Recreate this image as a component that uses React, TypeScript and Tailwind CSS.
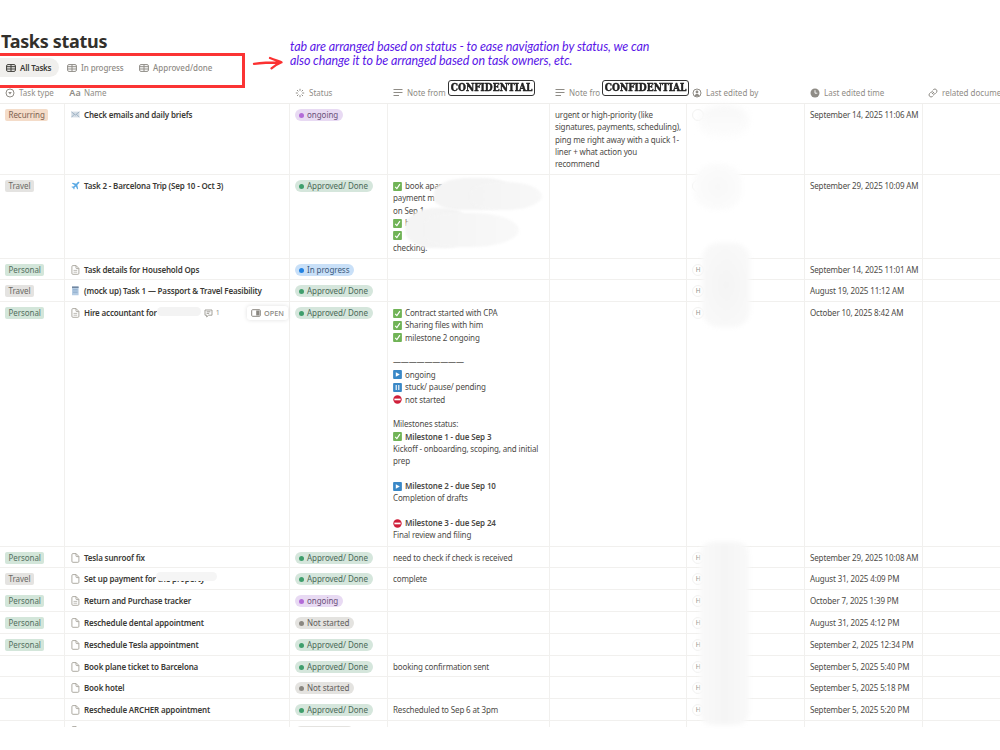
import React from 'react';
import clsx from 'clsx';

type Status = 'done' | 'progress' | 'ongoing' | 'idle';
type TaskType = 'Recurring' | 'Travel' | 'Personal';
type IconName = 'mail' | 'plane' | 'page' | 'text' | 'notebook';
type Mark = 'check' | 'play' | 'pause' | 'stop';

interface NoteLine {
  text: string;
  mark?: Mark;
  bold?: boolean;
}

interface Task {
  name: string;
  icon: IconName;
  type?: TaskType;
  status: Status;
  notes?: NoteLine[];
  extra?: string[];
  edited: string;
  avatar?: string;
  height: string;
  open?: boolean;
}

const COLUMNS = 'grid grid-cols-[65px_225px_98px_162px_137px_118px_118px_77px]';

const TASKS: Task[] = [
  {
    name: 'Check emails and daily briefs', icon: 'mail', type: 'Recurring', status: 'ongoing',
    extra: ['urgent or high-priority (like', 'signatures, payments, scheduling),', 'ping me right away with a quick 1-', 'liner + what action you', 'recommend'],
    edited: 'September 14, 2025 11:06 AM', height: 'h-[71px]',
  },
  {
    name: 'Task 2 - Barcelona Trip (Sep 10 - Oct 3)', icon: 'plane', type: 'Travel', status: 'done',
    notes: [
      { mark: 'check', text: 'book apar' },
      { text: 'payment m' },
      { text: 'on Sep 1' },
      { mark: 'check', text: 'h' },
      { mark: 'check', text: '' },
      { text: 'checking.' },
    ],
    edited: 'September 29, 2025 10:09 AM', height: 'h-[84px]',
  },
  { name: 'Task details for Household Ops', icon: 'text', type: 'Personal', status: 'progress', edited: 'September 14, 2025 11:01 AM', avatar: 'H', height: 'h-[21px]' },
  { name: '(mock up) Task 1 — Passport & Travel Feasibility', icon: 'notebook', type: 'Travel', status: 'done', edited: 'August 19, 2025 11:12 AM', avatar: 'H', height: 'h-[22px]' },
  {
    name: 'Hire accountant for', icon: 'text', type: 'Personal', status: 'done', open: true,
    notes: [
      { mark: 'check', text: 'Contract started with CPA' },
      { mark: 'check', text: 'Sharing files with him' },
      { mark: 'check', text: 'milestone 2 ongoing' },
      { text: '' },
      { text: '—————————' },
      { mark: 'play', text: 'ongoing' },
      { mark: 'pause', text: 'stuck/ pause/ pending' },
      { mark: 'stop', text: 'not started' },
      { text: '' },
      { text: 'Milestones status:' },
      { mark: 'check', text: 'Milestone 1 - due Sep 3', bold: true },
      { text: 'Kickoff - onboarding, scoping, and initial' },
      { text: 'prep' },
      { text: '' },
      { mark: 'play', text: 'Milestone 2 - due Sep 10', bold: true },
      { text: 'Completion of drafts' },
      { text: '' },
      { mark: 'stop', text: 'Milestone 3 - due Sep 24', bold: true },
      { text: 'Final review and filing' },
    ],
    edited: 'October 10, 2025 8:42 AM', avatar: 'H', height: 'h-[245px]',
  },
  { name: 'Tesla sunroof fix', icon: 'page', type: 'Personal', status: 'done', notes: [{ text: 'need to check if check is received' }], edited: 'September 29, 2025 10:08 AM', avatar: 'H', height: 'h-[21px]' },
  { name: 'Set up payment for the property', icon: 'page', type: 'Travel', status: 'done', notes: [{ text: 'complete' }], edited: 'August 31, 2025 4:09 PM', avatar: 'H', height: 'h-[22px]' },
  { name: 'Return and Purchase tracker', icon: 'text', type: 'Personal', status: 'ongoing', edited: 'October 7, 2025 1:39 PM', avatar: 'H', height: 'h-[22px]' },
  { name: 'Reschedule dental appointment', icon: 'page', type: 'Personal', status: 'idle', edited: 'August 31, 2025 4:12 PM', avatar: 'H', height: 'h-[22px]' },
  { name: 'Reschedule Tesla appointment', icon: 'page', type: 'Personal', status: 'done', edited: 'September 2, 2025 12:34 PM', avatar: 'H', height: 'h-[22px]' },
  { name: 'Book plane ticket to Barcelona', icon: 'page', status: 'done', notes: [{ text: 'booking confirmation sent' }], edited: 'September 5, 2025 5:40 PM', avatar: 'H', height: 'h-[21px]' },
  { name: 'Book hotel', icon: 'page', status: 'idle', edited: 'September 5, 2025 5:18 PM', avatar: 'H', height: 'h-[22px]' },
  { name: 'Reschedule ARCHER appointment', icon: 'page', status: 'done', notes: [{ text: 'Rescheduled to Sep 6 at 3pm' }], edited: 'September 5, 2025 5:20 PM', avatar: 'H', height: 'h-[22px]' },
];

const STATUS_STYLES: Record<Status, { label: string; pill: string; dot: string }> = {
  done: { label: 'Approved/ Done', pill: 'bg-[#d5e6dc] text-[#4b6a58]', dot: 'bg-[#3f9e6c]' },
  progress: { label: 'In progress', pill: 'bg-[#c9e0f8] text-[#3c5b7c]', dot: 'bg-[#2383e2]' },
  ongoing: { label: 'ongoing', pill: 'bg-[#e8daf3] text-[#6a5179]', dot: 'bg-[#b36bd8]' },
  idle: { label: 'Not started', pill: 'bg-[#e4e3e0] text-[#62605c]', dot: 'bg-[#8a8781]' },
};

const TYPE_STYLES: Record<TaskType, string> = {
  Recurring: 'bg-[#f4dcc9] text-[#7d6250]',
  Travel: 'bg-[#e4e3e1] text-[#6a6864]',
  Personal: 'bg-[#d3e6da] text-[#54705f]',
};

const TableIcon = () => (
  <svg viewBox="0 0 10 8" className="h-2 w-2.5 shrink-0" fill="none" stroke="currentColor" strokeWidth="1">
    <rect x="0.6" y="0.6" width="8.8" height="6.8" rx="1.3" />
    <path d="M0.6 2.7h8.8M0.6 5h8.8M5 0.6v6.8" />
  </svg>
);

const LinesIcon = () => (
  <svg viewBox="0 0 10 9" className="h-[9px] w-2.5 shrink-0" fill="none" stroke="currentColor" strokeWidth="1">
    <path d="M0.5 1.5h9M0.5 4.5h9M0.5 7.5h5.5" />
  </svg>
);

// Icon shown in front of each task name
const RowIcon: React.FC<{ name: IconName }> = ({ name }) => {
  if (name === 'mail') {
    return (
      <svg viewBox="0 0 9 10" className="h-2.5 w-[9px]">
        <rect x="0.3" y="1.6" width="8.2" height="5.8" fill="#d5dde5" />
        <path d="M0.4 1.8 4.4 5l4-3.2M0.4 7.3 3.3 4.3M8.4 7.3 5.5 4.3" fill="none" stroke="#8ba3b7" strokeWidth="0.7" />
      </svg>
    );
  }
  if (name === 'plane') {
    return (
      <svg viewBox="0 0 9 10" className="h-2.5 w-[9px]">
        <path d="M8.3 0.9c-.8-.3-1.5.1-2 .7L5.2 2.8 1.7 1.8l-.8.7 2.9 1.7L2.5 5.600l-1.600-.1-.5.5 1.700.9.8 1.700.6-.5v-1.500L4.900 5.400l1.400 3 .8-.8-.8-3.700 1.200-1.200c.6-.6 1-1.200.8-1.800z" fill="#5aa9e4" />
      </svg>
    );
  }
  if (name === 'notebook') {
    return (
      <svg viewBox="0 0 9 10" className="h-2.5 w-[9px]">
        <rect x="1" y="0.5" width="6.6" height="8.8" rx="0.5" fill="#b4cbe2" />
        <rect x="1" y="0.5" width="6.6" height="1.5" fill="#71869f" />
        <path d="M2 3.500h4.600M2 5h4.600M2 6.500h4.600" stroke="#7f9fc2" strokeWidth="0.5" />
      </svg>
    );
  }
  return (
    <svg viewBox="0 0 9 10" className="h-2.5 w-[9px]" fill="none" stroke="#a5a199" strokeWidth="0.9">
      <path d="M1.9 0.6h3.2L7.9 3.4v4.9a1 1 0 0 1-1 1h-5a1 1 0 0 1-1-1V1.6a1 1 0 0 1 1-1z" />
      <path d="M5 0.7v2.1a.8.8 0 0 0 .8.8h2" />
      {name === 'text' && <path d="M2.5 5.400h3.700M2.500 7.200h3.700" strokeWidth="0.7" />}
    </svg>
  );
};

const MarkIcon: React.FC<{ mark: Mark }> = ({ mark }) => (
  <svg viewBox="0 0 9 9" className="mr-[3px] h-[9px] w-[9px] shrink-0">
    {mark === 'stop' ? (
      <>
        <circle cx="4.5" cy="4.5" r="4.2" fill="#cf1f3a" />
        <rect x="1.4" y="3.6" width="6.2" height="1.7" fill="#fff" />
      </>
    ) : (
      <rect x="0.1" y="0.1" width="8.8" height="8.8" rx="0.9" fill={mark === 'check' ? '#70b356' : '#3a88c7'} />
    )}
    {mark === 'check' && <path d="M2.2 4.8 3.9 6.600 6.900 2.200" fill="none" stroke="#fff" strokeWidth="1.200" />}
    {mark === 'play' && <path d="M2.8 2.200v4.600l4-2.300z" fill="#fff" />}
    {mark === 'pause' && <path d="M3.2 2v5M5.8 2v5" stroke="#fff" strokeWidth="1.100" />}
  </svg>
);

const StatusPill: React.FC<{ status: Status }> = ({ status }) => {
  const { label, pill, dot } = STATUS_STYLES[status];
  return (
    <span className={clsx('inline-flex h-3 items-center gap-[3px] rounded-full pr-[5px] pl-1 tracking-[-0.04px] whitespace-nowrap', pill)}>
      <span className={clsx('h-[5px] w-[5px] rounded-full', dot)} />
      {label}
    </span>
  );
};

const Stamp: React.FC<{ className: string }> = ({ className }) => (
  <div className={clsx('absolute flex h-4 w-[87px] items-center justify-center rounded-[3px] border-[1.5px] border-[#333] bg-white', className)}>
    <span className="scale-x-[0.84] font-['DejaVu_Serif',serif] text-[10.8px] leading-none font-bold text-[#222] [-webkit-text-stroke:0.5px_#222]">
      CONFIDENTIAL
    </span>
  </div>
);

const HeaderCell: React.FC<{ icon: React.ReactNode; label: string; className?: string }> = ({ icon, label, className }) => (
  <div className={clsx('flex items-center pl-[5px] whitespace-nowrap', className)}>
    <span className="mr-1 flex w-2.5 shrink-0 justify-center">{icon}</span>
    {label}
  </div>
);

const TableHeader = () => (
  <div className={clsx(COLUMNS, 'h-[22px] border-b border-[#efeeec] text-[#8f8c86]')}>
    <HeaderCell
      label="Task type"
      icon={
        <svg viewBox="0 0 10 10" className="h-2.5 w-2.5 shrink-0" fill="none" stroke="currentColor">
          <circle cx="5" cy="5" r="4" />
          <path d="M3.2 4h3.600L5 6.600z" fill="currentColor" stroke="none" />
        </svg>
      }
    />
    <HeaderCell label="Name" icon={<span className="text-[9px] font-semibold">Aa</span>} />
    <HeaderCell
      label="Status"
      icon={
        <svg viewBox="0 0 10 10" className="h-2.5 w-2.5 shrink-0" fill="none" stroke="currentColor" strokeWidth="1">
          <path d="M5 0.8v2M5 7.200v2M0.8 5h2M7.200 5h2M2 2l1.400 1.400M6.600 6.600 8 8M2 8l1.400-1.400M6.600 3.400 8 2" />
        </svg>
      }
    />
    <HeaderCell label="Note from" icon={<LinesIcon />} />
    <HeaderCell label="Note fro" icon={<LinesIcon />} />
    <HeaderCell
      label="Last edited by"
      icon={
        <svg viewBox="0 0 10 10" className="h-2.5 w-2.5 shrink-0" fill="none" stroke="currentColor">
          <circle cx="5" cy="5" r="4" />
          <circle cx="5" cy="4" r="1.4" fill="currentColor" stroke="none" />
          <path d="M2.5 7.600c.5-2.200 4.500-2.200 5 0-1.300 1.300-3.700 1.300-5 0z" fill="currentColor" stroke="none" />
        </svg>
      }
    />
    <HeaderCell
      label="Last edited time"
      icon={
        <svg viewBox="0 0 10 10" className="h-2.5 w-2.5 shrink-0">
          <circle cx="5" cy="5" r="4.5" fill="currentColor" />
          <path d="M5 2.200V5.200h2.300" fill="none" stroke="#fff" strokeWidth="0.9" />
        </svg>
      }
    />
    <HeaderCell
      label="related documen"
      icon={
        <svg viewBox="0 0 24 24" className="h-2.5 w-2.5 shrink-0" fill="none" stroke="currentColor" strokeWidth="2.4" strokeLinecap="round">
          <path d="M10 13a5 5 0 0 0 7.500.5l3-3a5 5 0 0 0-7-7l-1.700 1.700M14 11a5 5 0 0 0-7.500-.5l-3 3a5 5 0 0 0 7 7l1.700-1.700" />
        </svg>
      }
    />
  </div>
);

const Cell: React.FC<{ children?: React.ReactNode; last?: boolean }> = ({ children, last }) => (
  <div className={clsx('min-w-0 pt-[5px] pl-[5px]', !last && 'border-r border-[#f1f0ee]')}>{children}</div>
);

const TaskRow: React.FC<{ task: Task }> = ({ task }) => (
  <div className={clsx(COLUMNS, task.height, 'border-b border-[#f1f0ee] leading-[12.36px] tracking-[-0.14px] whitespace-nowrap')}>
    <Cell>
      {task.type && (
        <span className={clsx('flex h-3 w-fit items-center rounded-[2px] px-[3.5px] tracking-[-0.06px]', TYPE_STYLES[task.type])}>{task.type}</span>
      )}
    </Cell>
    <Cell>
      <div className="flex h-3 items-center">
        <span className="mr-1 ml-px shrink-0"><RowIcon name={task.icon} /></span>
        <span className="font-semibold tracking-[-0.17px] text-[#3b3a36]">{task.name}</span>
        {task.open && (
          <>
            <svg viewBox="0 0 9 9" className="ml-[47px] h-[9px] w-[9px]" fill="none" stroke="#99968f" strokeWidth="0.9">
              <path d="M1 1h7v5.200H4.600L2.700 8V6.200H1zM2.600 2.800h3.800M2.600 4.400h2.600" />
            </svg>
            <span className="ml-[3px] text-[7px] text-[#99968f]">1</span>
            <span className="mr-px ml-auto flex h-[14px] items-center gap-[3px] rounded-[3px] bg-white px-1 text-[7.3px] font-medium tracking-normal text-[#8a8781] shadow-[0_0_4px_rgba(0,0,0,0.13)]">
              <svg viewBox="0 0 10 8" className="h-2 w-2.5" fill="none" stroke="currentColor">
                <rect x="0.7" y="0.7" width="8.6" height="6.6" rx="0.9" />
                <rect x="5.2" y="1.5" width="3.3" height="5" fill="currentColor" stroke="none" />
              </svg>
              OPEN
            </span>
          </>
        )}
      </div>
    </Cell>
    <Cell><div className="flex"><StatusPill status={task.status} /></div></Cell>
    <Cell>
      {task.notes?.map((line, i) => (
        <div key={i} className={clsx('flex h-[12.36px] items-center', line.bold && 'font-semibold')}>
          {line.mark && <MarkIcon mark={line.mark} />}
          {line.text}
        </div>
      ))}
    </Cell>
    <Cell>{task.extra?.map((line) => <div key={line} className="h-[12.36px]">{line}</div>)}</Cell>
    <Cell>
      <span className="flex h-3 w-3 items-center justify-center rounded-full border border-[#f2f2f1] text-[6.5px] text-[#8f8f8c]">{task.avatar}</span>
    </Cell>
    <Cell>{task.edited}</Cell>
    <Cell last />
  </div>
);

// Top sliver of the row below the fold
const PartialRow = () => (
  <div className={clsx(COLUMNS, 'h-1.5 overflow-hidden')}>
    <Cell />
    <Cell><div className="ml-px"><RowIcon name="page" /></div></Cell>
    <Cell><div className="h-3 w-[59px] rounded-full bg-[#e4e3e0]" /></Cell>
    <Cell />
    <Cell />
    <Cell />
    <Cell />
    <Cell last />
  </div>
);

const App: React.FC = () => {
  return (
    <div className="relative h-[750px] w-[1000px] overflow-hidden bg-white font-['Noto_Sans',sans-serif] text-[8px] text-[#4d4b47]">
      <div className="flex h-[727px] flex-col overflow-hidden">
        <h1 className="h-[58px] shrink-0 pt-[29px] pl-px text-[18px] leading-6 font-bold tracking-[-0.3px] text-[#32302c]">Tasks status</h1>
        <div className="flex h-6 shrink-0 items-start font-medium text-[#8f8c86]">
          <div className="flex h-[19px] w-[59px] items-center gap-1 rounded-r-full bg-[#f0efed] pl-1.5 font-semibold tracking-[-0.2px] whitespace-nowrap text-[#3b3a36]">
            <TableIcon />
            All Tasks
          </div>
          <div className="ml-2 flex h-[19px] w-[72px] items-center gap-1 tracking-[-0.1px] whitespace-nowrap"><TableIcon />In progress</div>
          <div className="flex h-[19px] items-center gap-1 whitespace-nowrap"><TableIcon />Approved/done</div>
        </div>
        <div className="shrink-0">
          <TableHeader />
          {TASKS.map((task) => <TaskRow key={task.name} task={task} />)}
          <PartialRow />
        </div>

        {/* Smudges that hide names and private details */}
        <div className="absolute top-[178px] left-[434px] h-[32px] w-[80px] rounded-[45%_40%_40%_35%] bg-[#f4f4f4] blur-[1px]" />
        <div className="absolute top-[182px] left-[470px] h-[28px] w-[72px] rounded-[40%_50%_50%_40%] bg-linear-to-r from-[#f4f4f4] to-[#f8f8f8] blur-[1px]" />
        <div className="absolute top-[208px] left-[405px] h-[40px] w-[60px] rounded-[50%_30%_30%_45%] bg-[#f4f4f4] blur-[1px]" />
        <div className="absolute top-[213px] left-[425px] h-[34px] w-[94px] rounded-[30%_50%_50%_30%] bg-linear-to-r from-[#f4f4f4] to-[#f9f9f9] blur-[1px]" />
        <div className="absolute top-[307px] left-[157px] h-[9px] w-[44px] rounded-full bg-[#f3f3f3] blur-[0.5px]" />
        <div className="absolute top-[572px] left-[156px] h-[9px] w-[61px] rounded-full bg-[#f5f5f5] blur-[0.5px]" />
        <div className="absolute top-[105px] left-[699px] h-[33px] w-[50px] rounded-[45%] bg-linear-to-b from-[#f8f8f8] to-[#fdfdfd] blur-[3px]" />
        <div className="absolute top-[164px] left-[694px] h-[46px] w-[48px] rounded-[40%] bg-radial from-[#f8f8f8] to-[#fdfdfd] blur-[2px]" />
        <div className="absolute top-[243px] left-[702px] h-[84px] w-[48px] rounded-2xl bg-radial from-[#f4f4f4] to-[#fafafa] blur-[2px]" />
        <div className="absolute top-[542px] left-[700px] h-[183px] w-[49px] rounded-xl bg-linear-to-r from-[#f9f9f9] via-[#f5f5f5] to-[#f9f9f9] blur-[2px]" />
      </div>

      {/* Annotations */}
      <div className="absolute top-[53px] -left-1 h-[35px] w-[249px] border-[3px] border-[#fb3434]" />
      <svg viewBox="0 0 32 16" className="absolute top-[55px] left-[252px] h-4 w-8" fill="none" stroke="#fb3131" strokeWidth="2.3" strokeLinecap="round" strokeLinejoin="round">
        <path d="M2 8.800c8-1 17-1.300 26-1.300M18 3c3.500 1.200 7 2.600 11.500 4.300-3.500 1.500-6.500 3.200-10 6" />
      </svg>
      <p className="absolute top-[40px] left-[290px] font-['Lato',cursive] text-[12.5px] leading-[14px] tracking-[-0.1px] whitespace-nowrap text-[#5a17e8] italic">
        tab are arranged based on status - to ease navigation by status, we can
        <br />
        also change it to be arranged based on task owners, etc.
      </p>
      <Stamp className="top-[80px] left-[448px]" />
      <Stamp className="top-[80px] left-[602px]" />
    </div>
  );
};

export default App;
